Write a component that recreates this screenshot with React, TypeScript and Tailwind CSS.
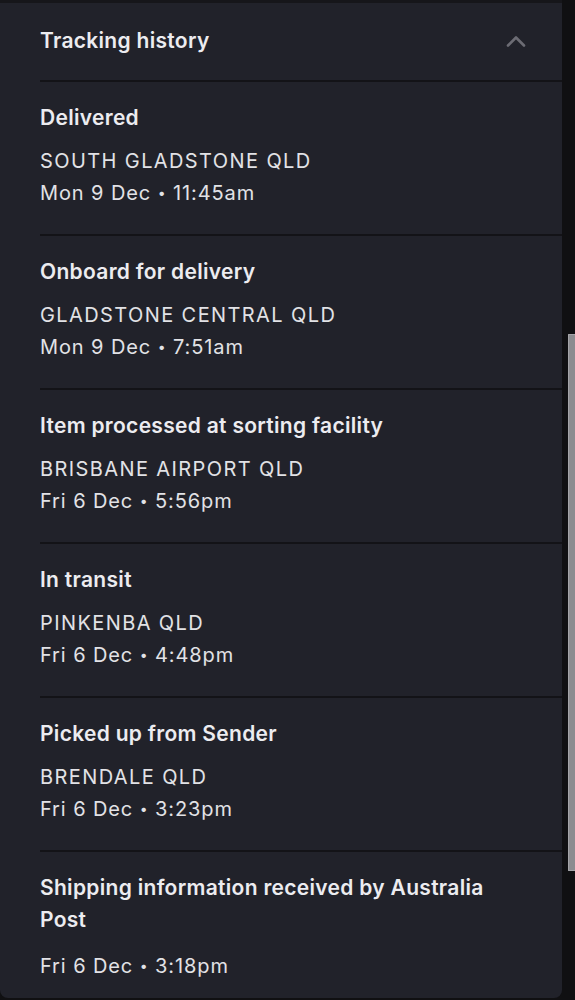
import React from 'react';

type Event = {
  status: string;
  location?: string;
  day: string;
  time: string;
};

const events: Event[] = [
  { status: 'Delivered', location: 'SOUTH GLADSTONE QLD', day: 'Mon 9 Dec', time: '11:45am' },
  { status: 'Onboard for delivery', location: 'GLADSTONE CENTRAL QLD', day: 'Mon 9 Dec', time: '7:51am' },
  { status: 'Item processed at sorting facility', location: 'BRISBANE AIRPORT QLD', day: 'Fri 6 Dec', time: '5:56pm' },
  { status: 'In transit', location: 'PINKENBA QLD', day: 'Fri 6 Dec', time: '4:48pm' },
  { status: 'Picked up from Sender', location: 'BRENDALE QLD', day: 'Fri 6 Dec', time: '3:23pm' },
  { status: 'Shipping information received by Australia Post', day: 'Fri 6 Dec', time: '3:18pm' },
];

const EventRow = ({ event }: { event: Event }) => (
  <div className="border-t-2 border-[#131317] pt-5 pb-[25px] pr-10">
    <div className="text-[21px] leading-8 font-semibold tracking-[0.3px] text-[#ececf0]">{event.status}</div>
    {event.location ? (
      <div className="mt-[11px] text-[20px] leading-8 tracking-[1.4px] text-[#e2e2e6]">{event.location}</div>
    ) : null}
    <div className={`${event.location ? '' : 'mt-[14px]'} text-[20px] leading-8 tracking-[0.9px] text-[#e2e2e6]`}>
      {event.day} <span className="text-[14px] align-[2px]">•</span> {event.time}
    </div>
  </div>
);

const App: React.FC = () => {
  return (
    <div className="flex h-[1000px] w-[575px] bg-[#101012] font-['Inter',sans-serif] antialiased">
      {/* Panel */}
      <div className="h-[998px] w-[562px] rounded-b-lg bg-[#21222a] overflow-hidden">
        <div className="h-[3px] bg-[#16161a]" />
        <div className="flex items-center justify-between pl-10 pr-[36px] pt-[22px] pb-[23px]">
          <h2 className="text-[21px] leading-8 font-semibold tracking-[0.3px] text-[#ececf0]">Tracking history</h2>
          <svg width="20" height="12" viewBox="0 0 20 12" fill="none" className="text-[#6c6c74]">
            <polyline
              points="2,10.5 10,2.5 18,10.5"
              stroke="currentColor"
              strokeWidth="2.6"
              strokeLinecap="round"
              strokeLinejoin="round"
            />
          </svg>
        </div>
        <div className="pl-10">
          {events.map((event) => (
            <EventRow key={event.status} event={event} />
          ))}
        </div>
      </div>

      {/* Scrollbar */}
      <div className="flex-1 pl-[6px]">
        <div className="mt-[334px] h-[537px] w-full rounded-l-[1px] border border-r-0 border-[#a4a4a8] bg-[#8c8c90]" />
      </div>
    </div>
  );
};

export default App;
